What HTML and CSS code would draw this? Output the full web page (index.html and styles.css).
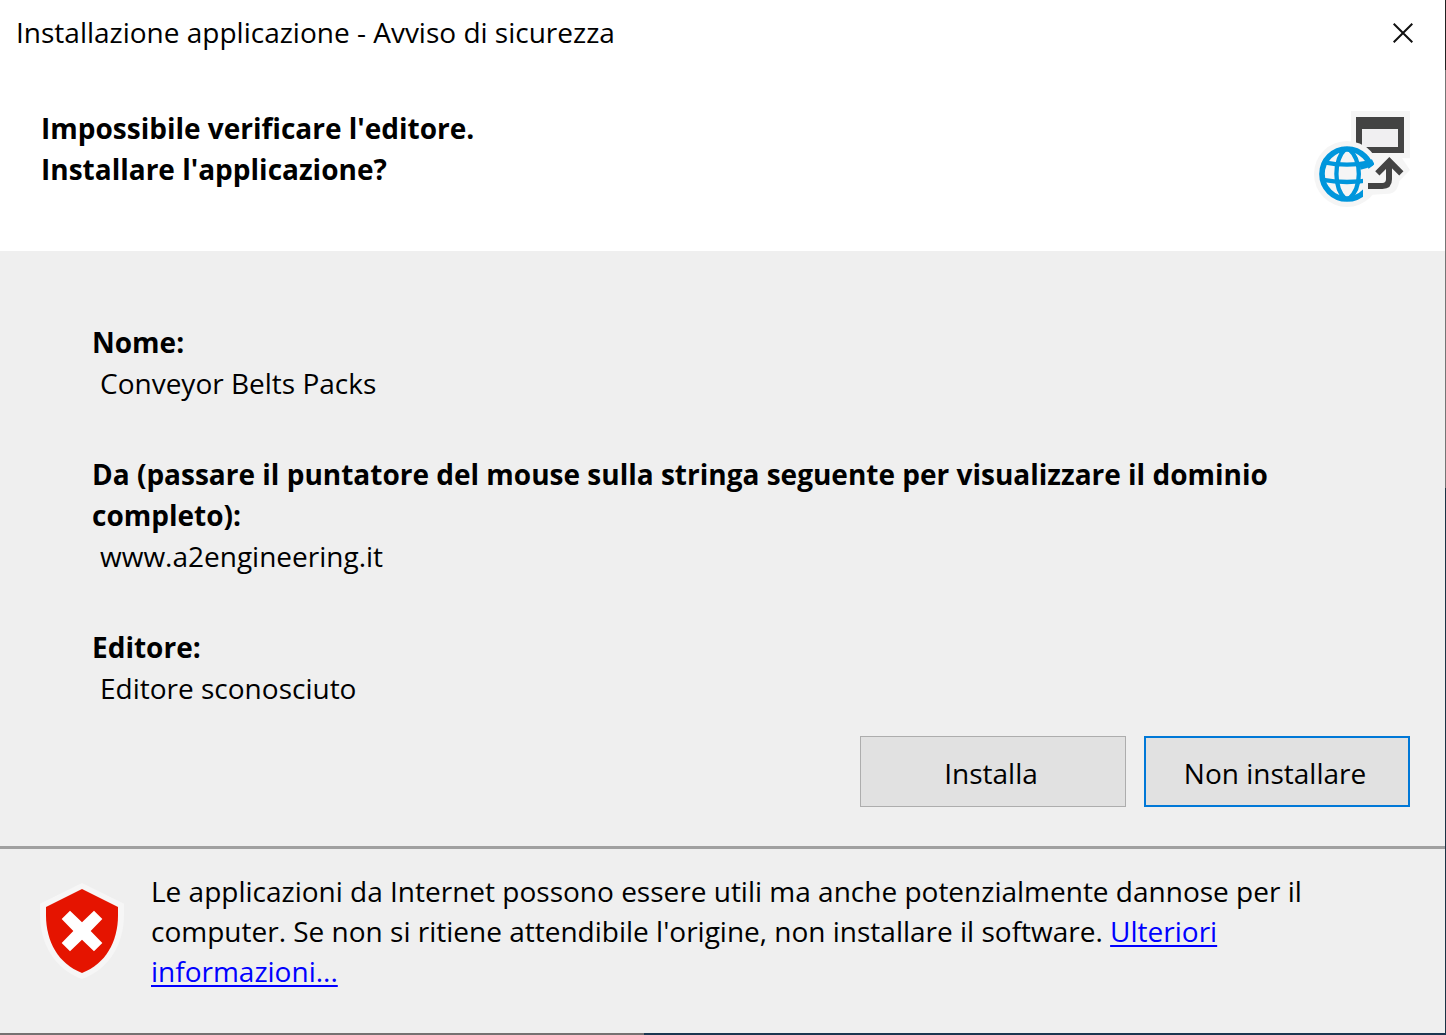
FILE: index.html
```html
<!DOCTYPE html>
<html lang="it">
<head>
<meta charset="utf-8">
<meta name="viewport" content="width=device-width, initial-scale=1">
<title>Installazione applicazione - Avviso di sicurezza</title>
<link rel="stylesheet" href="styles.css">
</head>
<body>
<main class="dialog">
  <header class="titlebar">
    <p class="titlebar-text">Installazione applicazione - Avviso di sicurezza</p>
    <button class="close" type="button" aria-label="Chiudi">
      <svg width="20" height="20" viewBox="0 0 20 20" aria-hidden="true"><path d="M.7.7l18.6 18.6M19.3.7L.7 19.3" fill="none" stroke="#111" stroke-width="2"/></svg>
    </button>
  </header>

  <section class="banner">
    <h1 class="question">Impossibile verificare l'editore.<br>Installare l'applicazione?</h1>
    <svg class="icon" viewBox="42 33 288 288" aria-hidden="true">
      <clipPath id="globe-cut"><path d="M42 33h180v161l-17 13h-16v114H42z"/></clipPath>
      <path d="M153 33h177v142h-24l24 35-32 33c-5 25-14 38-32 38l-48 3H153z" fill="#f5f5f5"/>
      <path d="M168 51h144v108H168z" fill="#434343"/>
      <path d="M186 87h108v54H186z" fill="#f0eff1"/>
      <circle cx="141" cy="222" r="99" fill="#f5f5f5"/>
      <path d="M204 258h43q20 0 20-20v-55M232 220l36-36 36 36" fill="none" stroke="#434343" stroke-width="18"/>
      <g clip-path="url(#globe-cut)" fill="none" stroke="#0096dc">
        <circle cx="141" cy="222" r="75" stroke-width="17"/>
        <path d="M72 187q69 14 138 0M64 239q77 14 154 0" stroke-width="13"/>
        <path d="M137 145c-37 36-37 118 0 154M145 145c42 36 42 118 0 154" stroke-width="13"/>
        <path d="M180 200q20-3 40-14" stroke-width="18"/>
      </g>
    </svg>
  </section>

  <section class="details">
    <dl class="fields">
      <div class="field">
        <dt>Nome:</dt>
        <dd>Conveyor Belts Packs</dd>
      </div>
      <div class="field">
        <dt>Da (passare il puntatore del mouse sulla stringa seguente per visualizzare il dominio completo):</dt>
        <dd>www.a2engineering.it</dd>
      </div>
      <div class="field">
        <dt>Editore:</dt>
        <dd>Editore sconosciuto</dd>
      </div>
    </dl>
    <div class="actions">
      <button class="button" type="button">Installa</button>
      <button class="button button-default" type="button">Non installare</button>
    </div>
  </section>

  <footer class="warning">
    <svg class="icon" viewBox="42 39 288 288" aria-hidden="true">
      <path d="M186 39l126 62v31c0 91-44 165-126 195C104 297 60 223 60 132v-31z" fill="#f6f6f6"/>
      <path d="M186 57l108 54v25c0 79-37 146-108 173C115 282 78 215 78 136v-25z" fill="#e51400"/>
      <path d="M150 122l36 35 36-35 25 25-35 36 35 36-25 25-36-35-36 35-25-25 35-36-35-36z" fill="#fff"/>
    </svg>
    <p class="warning-text">Le applicazioni da Internet possono essere utili ma anche potenzialmente dannose per il computer. Se non si ritiene attendibile l'origine, non installare il software. <a href="#info">Ulteriori informazioni...</a></p>
  </footer>
</main>
</body>
</html>
```
FILE: styles.css
```css
* {
  box-sizing: border-box;
}

body,
h1,
p,
dl,
dd {
  margin: 0;
}

body {
  font-family: "Segoe UI", "Open Sans", sans-serif;
  font-size: 28px;
  line-height: 41px;
  color: #000;
}

.dialog {
  display: flex;
  flex-direction: column;
  min-height: 100vh;
  padding: 0 1px 2px 0;
  background:
    linear-gradient(to right, #757171 644px, #1b3650 644px) bottom / 100% 2px no-repeat,
    linear-gradient(#222 70px, #757575 70px, #757575 488px, #1b3344 488px) right / 1px 100% no-repeat,
    #efefef;
}

.titlebar {
  display: flex;
  align-items: center;
  justify-content: space-between;
  height: 65px;
  padding: 0 24px 0 16px;
  background: #fff;
}

.close {
  display: flex;
  padding: 8px;
  border: 0;
  background: none;
}

.banner {
  display: flex;
  align-items: flex-start;
  justify-content: space-between;
  min-height: 186px;
  padding: 43px 35px 40px 41px;
  background: #fff;
}

.question {
  font-size: 28px;
  line-height: 41px;
  font-weight: 700;
}

.icon {
  flex: none;
  width: 96px;
  height: 96px;
}

.banner .icon {
  margin-top: 3px;
}

.details {
  padding: 71px 35px 39px 92px;
  border-bottom: 3px solid #a0a0a0;
}

.fields {
  display: flex;
  flex-direction: column;
  gap: 50px;
  padding-right: 120px;
}

dt {
  font-weight: 700;
}

dd {
  padding-left: 8px;
}

.actions {
  display: flex;
  justify-content: flex-end;
  gap: 18px;
  margin-top: 27px;
}

.button {
  width: 266px;
  height: 71px;
  padding: 4px 4px 0 0;
  border: 1px solid #adadad;
  background: #e1e1e1;
  font: inherit;
  color: inherit;
}

.button-default {
  border: 2px solid #0078d7;
}

.warning {
  display: flex;
  flex: 1;
  gap: 21px;
  padding: 22px 100px 40px 34px;
}

.warning .icon {
  margin-top: 12px;
}

.warning-text {
  line-height: 40px;
}

a {
  color: #00f;
  text-decoration-thickness: 2px;
  text-underline-offset: 3px;
}
```
